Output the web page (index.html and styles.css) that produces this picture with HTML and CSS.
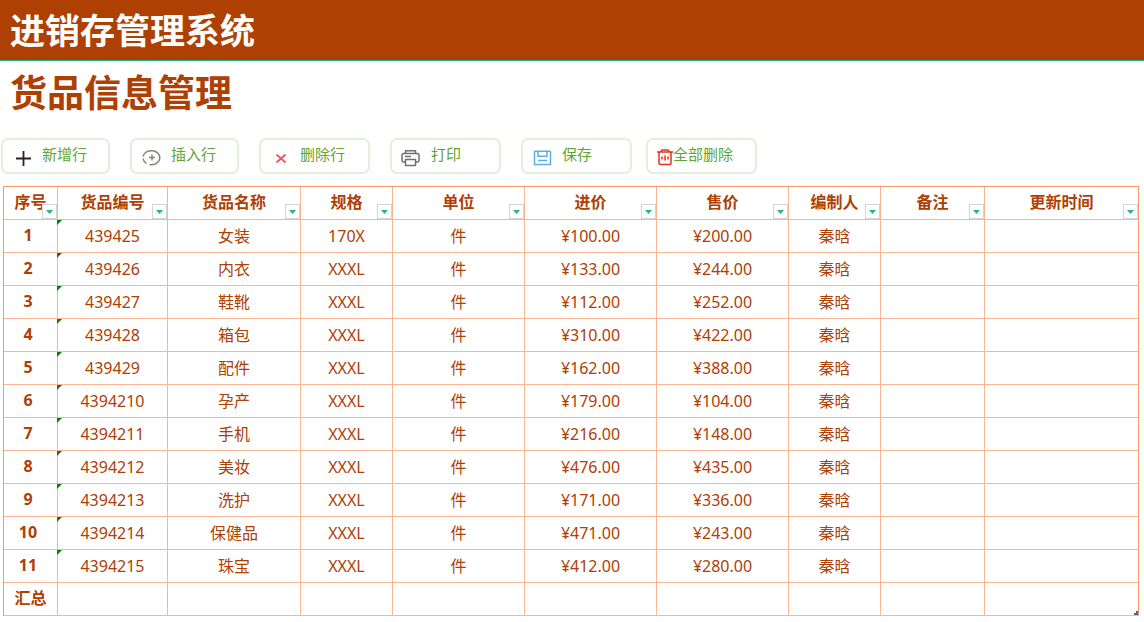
FILE: index.html
```html
<!DOCTYPE html>
<html lang="zh-CN">
<head>
<meta charset="utf-8">
<meta name="viewport" content="width=device-width, initial-scale=1">
<title>进销存管理系统</title>
<link rel="stylesheet" href="styles.css">
</head>
<body>
<header class="banner"><h1>进销存管理系统</h1></header>
<main>
<h2 class="title">货品信息管理</h2>
<div class="toolbar">
<button type="button" class="tool"><svg class="icon" width="22" height="20" viewBox="0 0 22 20" fill="none" stroke="#2b2024" stroke-width="1.8"><path d="M4 10.500h15M11.500 3v15"/></svg><span>新增行</span></button>
<button type="button" class="tool"><svg class="icon" width="22" height="20" viewBox="0 0 22 20" fill="none" stroke="#85837e" stroke-width="1.500"><path d="M2 8.500A8.500 7 0 1 1 8.500 16.500M2 10.500Q2.500 13.500 5.500 15.500M8 9.500h6M11 6.500v6"/></svg><span>插入行</span></button>
<button type="button" class="tool wide"><svg class="icon" width="22" height="20" viewBox="0 0 22 20" fill="none" stroke="#e85a56" stroke-width="1.800"><path d="M6.500 6.500l9 8M15.500 6.500l-9 8"/></svg><span>删除行</span></button>
<button type="button" class="tool wide"><svg class="icon" width="22" height="20" viewBox="0 0 22 20" fill="none" stroke="#6f6f6f" stroke-width="1.500" stroke-linejoin="round"><path d="M4.500 5.500V2.700h10v2.800M4.500 14H2.800Q1 14 1 12.500V7.300Q1 5.500 2.800 5.500h13.400Q18 5.500 18 7.300v5.200Q18 14 16.200 14h-1.700M4.500 11.500h10v6h-10zM4 8.500h6"/></svg><span>打印</span></button>
<button type="button" class="tool wide"><svg class="icon" width="22" height="20" viewBox="0 0 22 20" fill="none" stroke="#5bb0e0" stroke-width="1.500"><path d="M3.200 3.200h14.600Q18.500 3.200 18.500 4v12.500h-16V4Q2.500 3.200 3.200 3.200zM6 3.500v4.700h9V3.500M6 12.500h9"/></svg><span>保存</span></button>
<button type="button" class="tool wide compact"><svg class="icon" width="16" height="18" viewBox="0 0 16 18" fill="none" stroke="#e3301c" stroke-width="1.500"><path d="M0 3h16M4 2.500Q4 1 5.500 1h5q1.500 0 1.500 1.500M2 3v11Q2 15.500 3.500 15.500h9q1.500 0 1.500-1.500V3M5 7.500v3M8 6.500v5M11 7.500v3"/></svg><span>全部删除</span></button>
</div>
<div class="sheet">
<table class="goods">
<colgroup><col class="c-no"><col class="c-code"><col class="c-name"><col class="c-spec"><col class="c-price"><col class="c-price"><col class="c-price"><col class="c-spec"><col class="c-note"><col class="c-time"></colgroup>
<thead>
<tr>
<th scope="col">序号<button type="button" class="filter" aria-label="筛选序号"></button></th>
<th scope="col">货品编号<button type="button" class="filter" aria-label="筛选货品编号"></button></th>
<th scope="col">货品名称<button type="button" class="filter" aria-label="筛选货品名称"></button></th>
<th scope="col">规格<button type="button" class="filter" aria-label="筛选规格"></button></th>
<th scope="col">单位<button type="button" class="filter" aria-label="筛选单位"></button></th>
<th scope="col">进价<button type="button" class="filter" aria-label="筛选进价"></button></th>
<th scope="col">售价<button type="button" class="filter" aria-label="筛选售价"></button></th>
<th scope="col">编制人<button type="button" class="filter" aria-label="筛选编制人"></button></th>
<th scope="col">备注<button type="button" class="filter" aria-label="筛选备注"></button></th>
<th scope="col">更新时间<button type="button" class="filter" aria-label="筛选更新时间"></button></th>
</tr>
</thead>
<tbody>
<tr><th scope="row">1</th><td class="code">439425</td><td>女装</td><td>170X</td><td>件</td><td>¥100.00</td><td>¥200.00</td><td>秦晗</td><td></td><td></td></tr>
<tr><th scope="row">2</th><td class="code">439426</td><td>内衣</td><td>XXXL</td><td>件</td><td>¥133.00</td><td>¥244.00</td><td>秦晗</td><td></td><td></td></tr>
<tr><th scope="row">3</th><td class="code">439427</td><td>鞋靴</td><td>XXXL</td><td>件</td><td>¥112.00</td><td>¥252.00</td><td>秦晗</td><td></td><td></td></tr>
<tr><th scope="row">4</th><td class="code">439428</td><td>箱包</td><td>XXXL</td><td>件</td><td>¥310.00</td><td>¥422.00</td><td>秦晗</td><td></td><td></td></tr>
<tr><th scope="row">5</th><td class="code">439429</td><td>配件</td><td>XXXL</td><td>件</td><td>¥162.00</td><td>¥388.00</td><td>秦晗</td><td></td><td></td></tr>
<tr><th scope="row">6</th><td class="code">4394210</td><td>孕产</td><td>XXXL</td><td>件</td><td>¥179.00</td><td>¥104.00</td><td>秦晗</td><td></td><td></td></tr>
<tr><th scope="row">7</th><td class="code">4394211</td><td>手机</td><td>XXXL</td><td>件</td><td>¥216.00</td><td>¥148.00</td><td>秦晗</td><td></td><td></td></tr>
<tr><th scope="row">8</th><td class="code">4394212</td><td>美妆</td><td>XXXL</td><td>件</td><td>¥476.00</td><td>¥435.00</td><td>秦晗</td><td></td><td></td></tr>
<tr><th scope="row">9</th><td class="code">4394213</td><td>洗护</td><td>XXXL</td><td>件</td><td>¥171.00</td><td>¥336.00</td><td>秦晗</td><td></td><td></td></tr>
<tr><th scope="row">10</th><td class="code">4394214</td><td>保健品</td><td>XXXL</td><td>件</td><td>¥471.00</td><td>¥243.00</td><td>秦晗</td><td></td><td></td></tr>
<tr><th scope="row">11</th><td class="code">4394215</td><td>珠宝</td><td>XXXL</td><td>件</td><td>¥412.00</td><td>¥280.00</td><td>秦晗</td><td></td><td></td></tr>
</tbody>
<tfoot>
<tr><th scope="row">汇总</th><td></td><td></td><td></td><td></td><td></td><td></td><td></td><td></td><td class="corner"></td></tr>
</tfoot>
</table>
</div>
</main>
</body>
</html>
```

FILE: styles.css
```css
* { box-sizing: border-box; }
body {
  margin: 0;
  background: #fff;
  color: #ae4004;
  font-family: "Noto Sans", "Noto Sans CJK SC", sans-serif;
  font-size: 16px;
}
.banner {
  padding: 0 10px 2px;
  background: #ae4004;
  border-bottom: 1px solid #1cb57c;
  color: #fff;
}
.banner h1, .title {
  margin: 0;
  font-family: "Noto Sans CJK SC", sans-serif;
  font-weight: 700;
}
.banner h1 { font-size: 35px; line-height: 58px; }
.title { padding: 0 10px 2px; font-size: 37px; line-height: 60px; }

.toolbar { display: flex; gap: 20px; padding: 15px 1px 12px; }
.tool {
  display: flex;
  align-items: center;
  gap: 8px;
  width: 109px;
  height: 36px;
  padding: 0 0 0 9px;
  border: 2px solid #e2f0d9;
  border-radius: 7px;
  background: #fff;
  color: #5fa532;
  font-family: "Noto Sans CJK SC", sans-serif;
  font-size: 15px;
  font-weight: 400;
  line-height: 20px;
  white-space: nowrap;
}
.tool span { margin-bottom: 5px; }
.wide { width: 111px; }
.compact { gap: 0; margin-left: -6px; }
.icon { flex: none; margin-top: 3px; }

.sheet { padding: 0 5px 0 3px; }
.goods {
  width: 100%;
  table-layout: fixed;
  border-collapse: separate;
  border-spacing: 0;
  border-top: 1px solid #f79a63;
  border-left: 1px solid #f79a63;
}
.c-no { width: 54px; }
.c-code { width: 110px; }
.c-name { width: 133px; }
.c-spec { width: 92px; }
.c-price { width: 132px; }
.c-note { width: 104px; }
.c-time { width: 154px; }
.goods th, .goods td {
  position: relative;
  height: 33px;
  padding: 0;
  border-right: 1px solid #fbb594;
  border-bottom: 1px solid #fbb594;
  line-height: 24px;
  text-align: center;
  vertical-align: middle;
}
.goods td { font-weight: 400; }
.goods th { padding-bottom: 2px; font-weight: 700; }
.goods tbody th { padding-right: 5px; }
.goods th:last-child, .goods td:last-child { border-right-color: #f79a63; }

.filter {
  position: absolute;
  right: 0;
  bottom: 0;
  width: 15px;
  height: 15px;
  padding: 0;
  border: 1px solid #d3d5d8;
  background: #fff;
}
.filter::before {
  content: "";
  position: absolute;
  left: 3px;
  top: 5px;
  width: 7px;
  height: 4px;
  background: #1fb981;
  clip-path: polygon(0 0, 100% 0, 50% 100%);
}
.code::before {
  content: "";
  position: absolute;
  left: -1px;
  top: 0;
  width: 5px;
  height: 5px;
  background: #078007;
  clip-path: polygon(0 0, 100% 0, 0 100%);
}
.corner::after {
  content: "";
  position: absolute;
  right: 0;
  bottom: 0;
  width: 4px;
  height: 4px;
  background: #4d5bb0;
  clip-path: polygon(50% 0, 100% 0, 100% 100%, 0 100%, 0 50%, 50% 50%);
}
```
